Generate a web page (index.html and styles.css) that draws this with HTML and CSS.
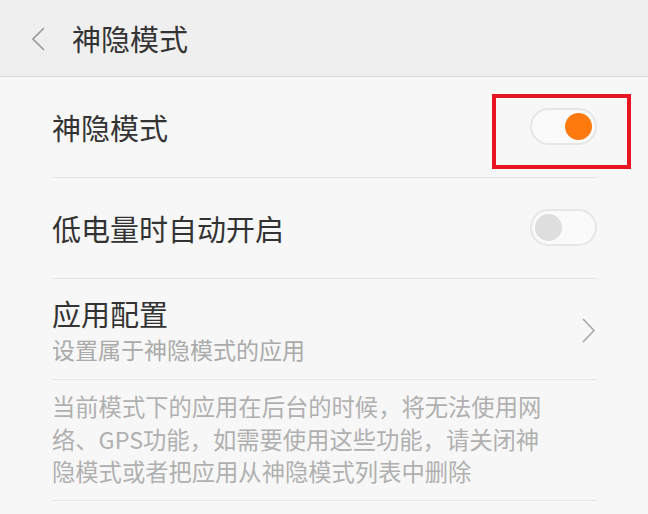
FILE: index.html
```html
<!DOCTYPE html>
<html lang="zh-CN">
<head>
  <meta charset="UTF-8">
  <title>神隐模式</title>
  <link rel="stylesheet" href="styles.css">
</head>
<body>
  <div class="header">
    <svg class="back" width="14" height="24" viewBox="0 0 14 24">
      <polyline points="12,1 1,12 12,23" fill="none" stroke="#9a9a9a" stroke-width="1.6"/>
    </svg>
    <h1>神隐模式</h1>
  </div>

  <div class="list">
    <div class="row">
      <span class="title">神隐模式</span>
      <div class="switch on"><span class="knob"></span></div>
      <div class="mark"></div>
    </div>

    <div class="row">
      <span class="title">低电量时自动开启</span>
      <div class="switch"><span class="knob"></span></div>
    </div>

    <div class="row">
      <div class="texts">
        <span class="title">应用配置</span>
        <span class="sub">设置属于神隐模式的应用</span>
      </div>
      <svg class="arrow" width="14" height="25" viewBox="0 0 14 25">
        <polyline points="1,1 12,12.5 1,24" fill="none" stroke="#a8a8a8" stroke-width="1.6"/>
      </svg>
    </div>

    <p class="note">当前模式下的应用在后台的时候，将无法使用网<br>络、GPS功能，如需要使用这些功能，请关闭神<br>隐模式或者把应用从神隐模式列表中删除</p>
  </div>
</body>
</html>
```

FILE: styles.css
```css
body { margin: 0; background: #f7f7f7; font-family: "Noto Sans CJK SC", "Noto Sans", sans-serif; height: 514px; overflow: hidden; }

.header { display: flex; align-items: center; height: 76px; background: #efefef; border-bottom: 1px solid #dadada; padding-left: 32px; }
.header .back { margin-right: 26px; margin-top: 1px; }
.header h1 { margin: 0; font-size: 29px; font-weight: normal; color: #333; }

.list { padding: 0 51px 0 52px; }
.row { position: relative; display: flex; align-items: center; justify-content: space-between; height: 100px; border-bottom: 1px solid #e4e4e4; }
.title { font-size: 29px; color: #333; line-height: 38px; }
.texts { display: flex; flex-direction: column; padding-top: 2px; }
.sub { font-size: 23px; color: #aaa; line-height: 34px; }
.arrow { margin-right: 1px; margin-top: 2px; }

.switch { display: flex; align-items: center; width: 57px; height: 33px; padding: 0 3px; border: 2px solid #e6e6e6; border-radius: 20px; background: #fafafa; margin-top: -2px; }
.switch .knob { width: 27px; height: 27px; border-radius: 50%; background: #dedede; }
.switch.on { justify-content: flex-end; }
.switch.on .knob { background: #ff7a0e; }

.mark { position: absolute; left: 440px; top: 17px; width: 131px; height: 67px; border: 4px solid #e8141f; }

.note { margin: 0; padding: 10px 0 12px; font-size: 23.3px; line-height: 32.5px; color: #b0b0b0; border-bottom: 1px solid #e4e4e4; white-space: nowrap; }
```
